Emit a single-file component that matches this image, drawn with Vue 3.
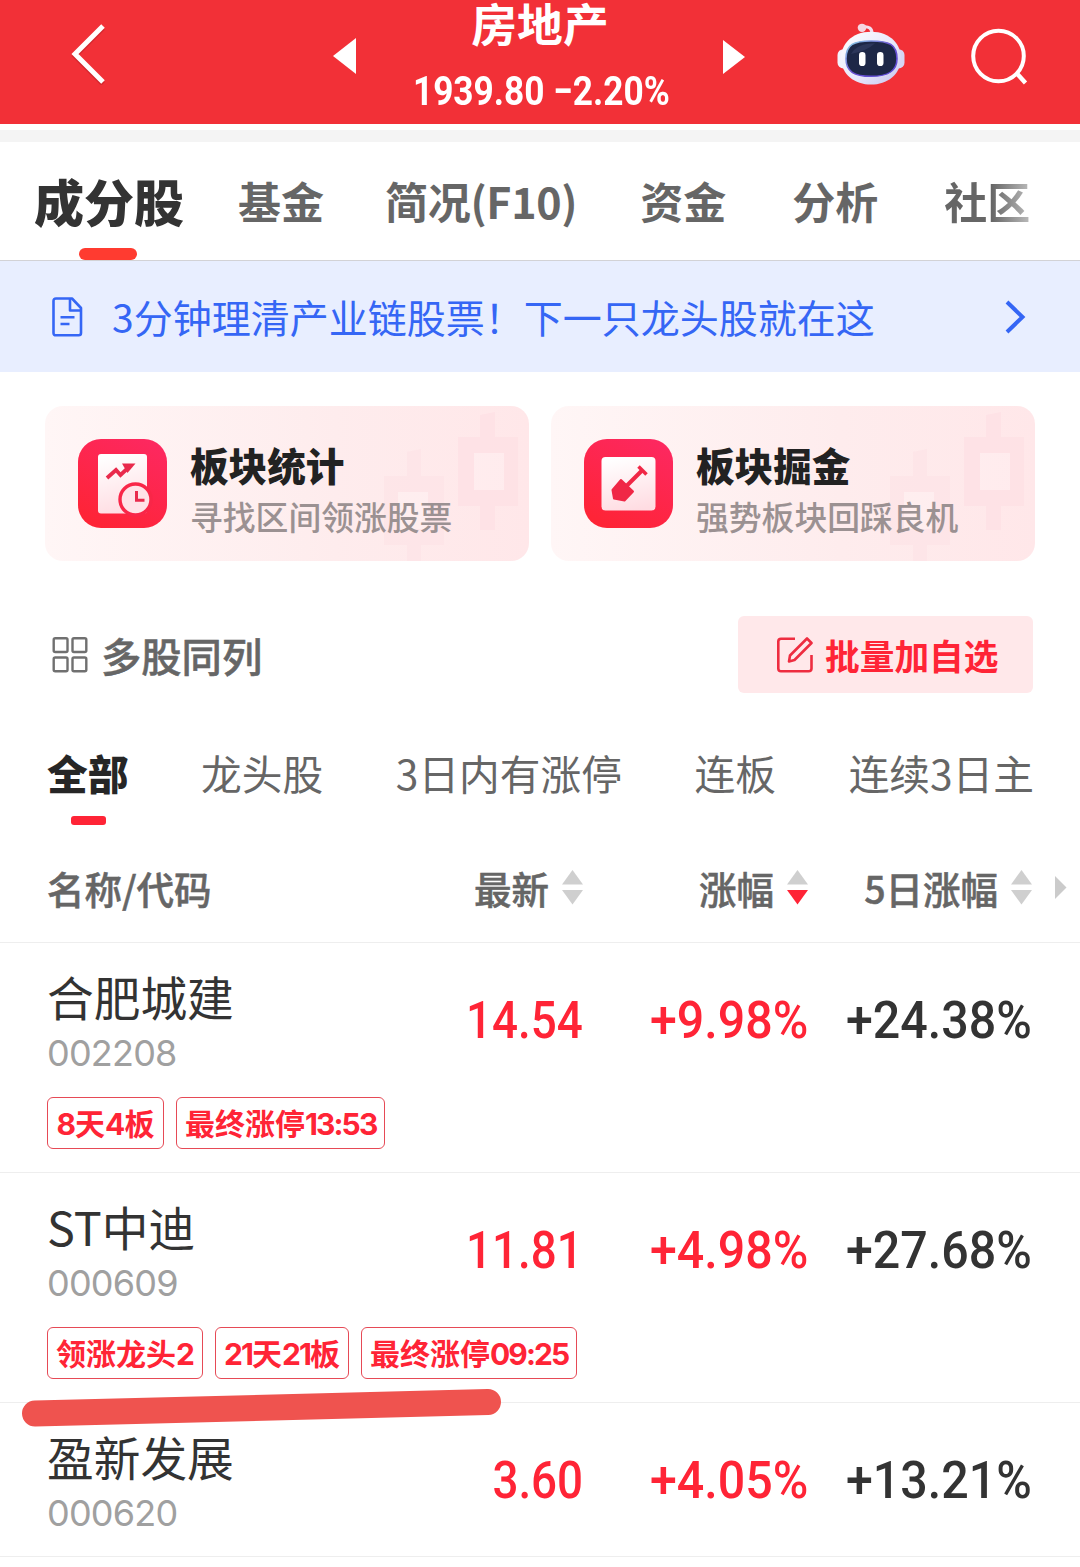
<script setup>
import { ref } from 'vue'

const tabs = ['成分股', '基金', '简况(F10)', '资金', '分析', '社区']
const activeTab = ref(0)

const filters = ['全部', '龙头股', '3日内有涨停', '连板', '连续3日主']
const activeFilter = ref(0)

const columns = [
    { label: '最新', sort: '' },
    { label: '涨幅', sort: 'desc' },
    { label: '5日涨幅', sort: '' }
]

const stocks = [
    { name: '合肥城建', code: '002208', price: '14.54', change: '+9.98%', change5: '+24.38%', tags: ['8天4板', '最终涨停13:53'] },
    { name: 'ST中迪', code: '000609', price: '11.81', change: '+4.98%', change5: '+27.68%', tags: ['领涨龙头2', '21天21板', '最终涨停09:25'] },
    { name: '盈新发展', code: '000620', price: '3.60', change: '+4.05%', change5: '+13.21%', tags: [] }
]

// digits are set tighter than the Chinese text around them
function splitDigits(tag) {
    return tag.split(/([\d:]+)/).filter(Boolean)
}
</script>

<template>
    <div class="page">
        <header class="header">
            <svg class="back" width="36" height="62" viewBox="0 0 36 62">
                <path d="M33 3 L5 31 L33 59" fill="none" stroke="#a01820" stroke-opacity=".35" stroke-width="5" transform="translate(0 2)" />
                <path d="M33 3 L5 31 L33 59" fill="none" stroke="#fff" stroke-width="5" />
            </svg>
            <svg class="prev" width="24" height="36" viewBox="0 0 24 36"><path d="M0 18 L23 0 V36 Z" fill="#fff" /></svg>
            <div class="heading">
                <div class="title">房地产</div>
                <div class="quote"><span>1939.80 −2.20%</span></div>
            </div>
            <svg class="next" width="22" height="34" viewBox="0 0 22 34"><path d="M0 0 L22 17 L0 34 Z" fill="#fff" /></svg>
            <svg class="robot" width="68" height="64" viewBox="0 0 68 66" preserveAspectRatio="none">
                <defs>
                    <linearGradient id="shell" x1="0" y1="0" x2="1" y2="1">
                        <stop offset="0" stop-color="#fff" />
                        <stop offset=".6" stop-color="#e6e5fa" />
                        <stop offset="1" stop-color="#c4c4ee" />
                    </linearGradient>
                    <linearGradient id="rim" x1="0" y1="0" x2="1" y2="1">
                        <stop offset="0" stop-color="#8ed8e8" />
                        <stop offset=".5" stop-color="#6a4fd0" />
                        <stop offset="1" stop-color="#5a4bd8" />
                    </linearGradient>
                </defs>
                <path d="M26 5 Q35 4 35 12" fill="none" stroke="#f3dfee" stroke-width="3.2" />
                <circle cx="25" cy="6" r="4.3" fill="#f6d6e2" />
                <rect x="0.5" y="28" width="12" height="20" rx="6" fill="#f3f2fc" />
                <rect x="55.5" y="28" width="12" height="20" rx="6" fill="#d6d6f4" />
                <path d="M34 10 C54 10 64 24 64 37 C64 54 50 64.5 34 64.5 C18 64.5 4 54 4 37 C4 24 14 10 34 10 Z" fill="url(#shell)" />
                <path d="M34 19.5 C52 19.5 60 23 60 38 C60 51 51 56 34 56 C17 56 9 51 9 38 C9 23 17 19.5 34 19.5 Z" fill="#1d2747" stroke="url(#rim)" stroke-width="1.6" />
                <path d="M14 33 Q20 22 38 22 Q30 30 14 33 Z" fill="#39436a" opacity=".55" />
                <rect x="22" y="31" width="6.5" height="14.5" rx="3.2" fill="#fff" />
                <rect x="40" y="31" width="6.5" height="14.5" rx="3.2" fill="#fff" />
            </svg>
            <svg class="search" width="58" height="60" viewBox="0 0 58 60">
                <circle cx="27.5" cy="29" r="25.3" fill="none" stroke="#fff" stroke-width="4" />
                <path d="M45.5 46 L54.5 56" stroke="#fff" stroke-width="4.4" />
            </svg>
        </header>
        <div class="divider"></div>

        <nav class="tabs">
            <div
                v-for="(tab, i) in tabs"
                :key="tab"
                class="tab"
                :class="{ active: i === activeTab, fading: i === tabs.length - 1 }"
                @click="activeTab = i"
            >{{ tab }}</div>
        </nav>

        <div class="banner">
            <svg width="31" height="40" viewBox="0 0 31 40" fill="none" stroke="#3566f5" stroke-width="2.6" stroke-linejoin="round">
                <path d="M4 1.5 H20 L29 11 V36 Q29 38.3 26.7 38.3 H4 Q1.5 38.3 1.5 36 V4 Q1.5 1.5 4 1.5 Z" />
                <path d="M18 1.5 V13.5 H29 M8.5 20.3 H22.5 M8.5 27 H17.5" />
            </svg>
            <span class="banner-text">3分钟理清产业链股票！下一只龙头股就在这</span>
            <svg class="more" width="21" height="34" viewBox="0 0 21 34"><path d="M2 2 L17.5 17 L2 32" fill="none" stroke="#3566f5" stroke-width="4" /></svg>
        </div>

        <svg class="defs" width="0" height="0">
            <defs>
                <linearGradient id="badge" x1=".3" y1="1" x2=".8" y2="0">
                    <stop offset="0" stop-color="#fe2436" />
                    <stop offset="1" stop-color="#fd2860" />
                </linearGradient>
                <linearGradient id="paper" x1=".4" y1="0" x2=".6" y2="1">
                    <stop offset="0" stop-color="#fff" />
                    <stop offset="1" stop-color="#ffdce2" />
                </linearGradient>
                <g id="candles" fill="#fddfe3" fill-rule="evenodd">
                    <path opacity=".4" d="M362 46 l14 -3 v27 h23 v69 h-23 v16 h-14 v-16 h-23 v-69 h23 Z M353 86 v37 h30 v-37 Z" />
                    <path opacity=".65" d="M435 9 l15 -3 v25 h23 v69 h-23 v24 h-15 v-24 h-22 v-69 h22 Z M429 47 v37 h30 v-37 Z" />
                    <path fill="#fff" opacity=".2" d="M353 86 h30 v37 h-30 Z M429 47 h30 v37 h-30 Z" />
                </g>
            </defs>
        </svg>
        <section class="cards">
            <div class="card">
                <svg class="card-bg" width="484" height="155"><use href="#candles" /></svg>
                <svg width="89" height="89" viewBox="0 0 89 89">
                    <rect width="89" height="89" rx="23" fill="url(#badge)" />
                    <rect x="20" y="15" width="49" height="59.5" rx="3" fill="url(#paper)" />
                    <path d="M29 39 L38 31 L42.5 36 L51 28" fill="none" stroke="#e92a4c" stroke-width="3.8" />
                    <path d="M44 24.5 H57.5 L49.5 34 Z" fill="#e92a4c" />
                    <circle cx="57.5" cy="60.5" r="15.5" fill="#ffe3e8" stroke="#f92648" stroke-width="3.4" />
                    <path d="M58.5 52 V61.3 H66.5" fill="none" stroke="#e92a4c" stroke-width="3" />
                </svg>
                <div class="card-text">
                    <div class="card-title">板块统计</div>
                    <div class="card-sub">寻找区间领涨股票</div>
                </div>
            </div>
            <div class="card">
                <svg class="card-bg" width="484" height="155"><use href="#candles" /></svg>
                <svg width="89" height="89" viewBox="0 0 89 89">
                    <rect width="89" height="89" rx="23" fill="url(#badge)" />
                    <rect x="17.5" y="18" width="54" height="53.5" rx="4" fill="url(#paper)" />
                    <path d="M37 41 L49 52.5 L40.5 61.5 L30 59.5 L28.5 51 Z" fill="#f02746" stroke="#f02746" stroke-width="2" stroke-linejoin="round" />
                    <path d="M43 46.5 L58.5 31" stroke="#f02746" stroke-width="4" />
                    <path d="M54.5 27.5 L62.5 35.5" stroke="#f02746" stroke-width="3.6" />
                </svg>
                <div class="card-text">
                    <div class="card-title">板块掘金</div>
                    <div class="card-sub">强势板块回踩良机</div>
                </div>
            </div>
        </section>

        <div class="toolbar">
            <svg width="36" height="36" viewBox="0 0 36 36" fill="none" stroke="#707070" stroke-width="2.4">
                <rect x="1.7" y="1.2" width="13.8" height="13.8" rx="1.5" />
                <rect x="20.5" y="1.2" width="13.8" height="13.8" rx="1.5" />
                <rect x="1.7" y="20.5" width="13.8" height="13.8" rx="1.5" />
                <rect x="20.5" y="20.5" width="13.8" height="13.8" rx="1.5" />
            </svg>
            <span class="multi">多股同列</span>
            <div class="add">
                <svg width="36" height="36" viewBox="0 0 36 36" fill="none" stroke="#ee2d40" stroke-width="2.6">
                    <path d="M18 1.7 H4 Q1.3 1.7 1.3 4.5 V31.5 Q1.3 34.3 4 34.3 H31.5 Q34.5 34.3 34.5 31.5 V18" />
                    <path d="M30 1.5 L34.5 6 L17.5 23 L12 24.5 L13 18.5 Z" stroke-linejoin="round" />
                </svg>
                <span>批量加自选</span>
            </div>
        </div>

        <nav class="filters">
            <div
                v-for="(filter, i) in filters"
                :key="filter"
                class="filter"
                :class="{ active: i === activeFilter }"
                @click="activeFilter = i"
            >{{ filter }}</div>
        </nav>

        <div class="thead">
            <div class="first">名称/代码</div>
            <div v-for="col in columns" :key="col.label" class="th">
                <span>{{ col.label }}</span>
                <svg width="21" height="35" viewBox="0 0 21 35">
                    <path d="M10.5 0 L21 14.5 H0 Z" fill="#cfcfcf" />
                    <path d="M10.5 34.5 L21 20 H0 Z" :fill="col.sort === 'desc' ? '#ff2436' : '#cfcfcf'" />
                </svg>
            </div>
            <svg class="scroll" width="12" height="23" viewBox="0 0 12 23"><path d="M0 0 L11.5 11.5 L0 23 Z" fill="#cbcbcb" /></svg>
        </div>

        <div v-for="stock in stocks" :key="stock.code" class="row" :class="{ short: !stock.tags.length }">
            <div class="cells">
                <div>
                    <div class="name">{{ stock.name }}</div>
                    <div class="code">{{ stock.code }}</div>
                </div>
                <div class="num price up"><span>{{ stock.price }}</span></div>
                <div class="num up"><span>{{ stock.change }}</span></div>
                <div class="num"><span>{{ stock.change5 }}</span></div>
            </div>
            <div v-if="stock.tags.length" class="tags">
                <div v-for="tag in stock.tags" :key="tag" class="tag">
                    <span v-for="(part, i) in splitDigits(tag)" :key="i" :class="{ digits: /\d/.test(part), single: part.length === 1 }">{{ part }}</span>
                </div>
            </div>
        </div>

        <!-- hand-drawn marker stroke over the list -->
        <svg class="marker" width="480" height="40" viewBox="0 0 480 40">
            <path d="M13 25.5 L466 14" stroke="#ef534f" stroke-width="26" stroke-linecap="round" />
        </svg>
    </div>
</template>

<style>
body {
    background: #fff;
}
</style>

<style scoped>
.page {
    position: relative;
    width: 1080px;
    height: 1567px;
    overflow: hidden;
    background: #fff;
    color: #333;
    font-family: "Noto Sans CJK SC", sans-serif;
    white-space: nowrap;
}

svg {
    flex: none;
    display: block;
}

.header {
    display: flex;
    align-items: flex-start;
    height: 124px;
    background: #f23037;
    color: #fff;
}

.back {
    margin: 23px 0 0 70px;
}

.prev {
    margin: 38px 0 0 227px;
}

.heading {
    width: 366px;
    text-align: center;
}

.title {
    height: 66px;
    line-height: 54px;
    font-family: Roboto, "Noto Sans CJK SC", sans-serif;
    font-size: 45.8px;
    font-weight: 700;
}

.quote {
    display: flex;
    justify-content: center;
    padding-left: 2px;
    line-height: 50px;
    font-family: Roboto, sans-serif;
    font-size: 41px;
    font-weight: 700;
}

.quote span {
    transform: scaleX(.86);
}

.next {
    margin-top: 40px;
}

.robot {
    margin: 22px 0 0 92px;
}

.search {
    margin: 27px 0 0 66px;
}

.divider {
    height: 12px;
    border-top: 6px solid #fff;
    background: #f4f4f4;
    background-clip: padding-box;
}

.tabs {
    display: flex;
    height: 118px;
    padding-left: 34px;
    border-bottom: 1px solid #d2d2d6;
    line-height: 117px;
    color: #666;
    font-size: 43px;
    font-weight: 700;
}

.tab {
    position: relative;
    margin-right: 66px;
}

.tab:nth-child(2) {
    margin-right: 61px;
}

.tab:nth-child(3) {
    margin-right: 63px;
    letter-spacing: -.3px;
}

.tab.active {
    width: 150px;
    margin-right: 54px;
    color: #333;
    font-size: 50px;
    font-weight: 900;
}

.tab.active::after {
    content: "";
    position: absolute;
    left: 45px;
    bottom: 0;
    width: 58px;
    height: 12px;
    border-radius: 6px;
    background: #ff3b30;
}

.tab.fading {
    margin-right: 0;
    background: linear-gradient(90deg, #666 55%, #bbb);
    background-clip: text;
    color: transparent;
}

.banner {
    display: flex;
    align-items: center;
    height: 111px;
    padding: 0 54px 0 52px;
    background: #e8eeff;
    color: #3566f5;
    font-size: 39px;
}

.banner-text {
    flex: 1;
    margin: -1px 0 0 29px;
}

.defs {
    position: absolute;
}

.cards {
    display: flex;
    gap: 22px;
    padding: 34px 45px 0;
}

.card {
    position: relative;
    display: flex;
    align-items: center;
    width: 484px;
    height: 155px;
    padding-left: 33px;
    box-sizing: border-box;
    border-radius: 18px;
    background: linear-gradient(90deg, #fff6f6, #feeced 60%, #ffe7e9);
}

.card-bg {
    position: absolute;
    left: 0;
    top: 0;
}

.card-text {
    position: relative;
    margin: 13px 0 0 23px;
}

.card-title {
    line-height: 51px;
    color: #222;
    font-size: 38.6px;
    font-weight: 800;
}

.card-sub {
    line-height: 51px;
    color: #9b9192;
    font-size: 32.8px;
    font-weight: 500;
}

.toolbar {
    display: flex;
    align-items: center;
    height: 77px;
    margin-top: 55px;
    padding: 0 47px 0 52px;
}

.multi {
    flex: 1;
    margin-left: 13px;
    color: #666;
    font-size: 40.3px;
    font-weight: 500;
    -webkit-text-stroke: .5px #666;
}

.add {
    display: flex;
    align-items: center;
    gap: 12px;
    width: 295px;
    height: 77px;
    padding-left: 39px;
    box-sizing: border-box;
    border-radius: 6px;
    background: #ffe8ea;
    color: #ff2436;
    font-size: 34.7px;
    font-weight: 700;
}

.filters {
    display: flex;
    justify-content: space-between;
    height: 83px;
    margin-top: 49px;
    padding: 0 46px 0 47px;
    line-height: 61px;
    color: #666;
    font-size: 40.7px;
}

.filter {
    position: relative;
}

.filter.active {
    color: #262626;
    font-weight: 900;
}

.filter.active::after {
    content: "";
    position: absolute;
    left: 24px;
    bottom: 0;
    width: 35px;
    height: 9px;
    border-radius: 3px;
    background: #ff2436;
}

.thead,
.cells {
    display: grid;
    grid-template-columns: 311px 225px 225px 224px;
    padding-left: 47px;
}

.thead {
    position: relative;
    height: 117px;
    border-bottom: 1px solid #eee;
    line-height: 125px;
    color: #666;
    font-size: 37.5px;
    font-weight: 500;
    -webkit-text-stroke: .5px #666;
}

.th {
    display: flex;
    justify-content: flex-end;
    gap: 13px;
}

.th svg {
    margin-top: 45px;
}

.scroll {
    position: absolute;
    left: 1055px;
    top: 51px;
}

.row {
    height: 229px;
    border-bottom: 1px solid #eee;
}

.row.short {
    height: 153px;
}

.cells {
    height: 154px;
}

.short .cells {
    height: 153px;
}

.name {
    height: 79px;
    line-height: 106px;
    font-size: 46.7px;
}

.code {
    line-height: 63px;
    color: #a0a0a0;
    font-family: Inter, sans-serif;
    font-size: 36px;
    letter-spacing: -.8px;
}

.num {
    display: flex;
    justify-content: flex-end;
    line-height: 156px;
    font-family: Roboto, sans-serif;
    font-size: 52px;
    font-weight: 500;
}

.num span {
    transform: scaleX(.93);
    transform-origin: right;
}

.num.price span {
    transform: scaleX(.88);
}

.up {
    color: #ff2436;
}

.tags {
    display: flex;
    gap: 12px;
    padding-left: 47px;
}

.tag {
    display: flex;
    justify-content: center;
    min-width: 117px;
    height: 52px;
    padding: 0 8px;
    box-sizing: border-box;
    border: 1.5px solid #e64a56;
    border-radius: 6px;
    line-height: 52px;
    color: #ff2436;
    font-family: Inter, "Noto Sans CJK SC", sans-serif;
    font-size: 30px;
    font-weight: 700;
}

.digits {
    letter-spacing: -1.9px;
}

.digits.single {
    letter-spacing: -1px;
}

.marker {
    position: absolute;
    left: 22px;
    top: 1388px;
}
</style>
